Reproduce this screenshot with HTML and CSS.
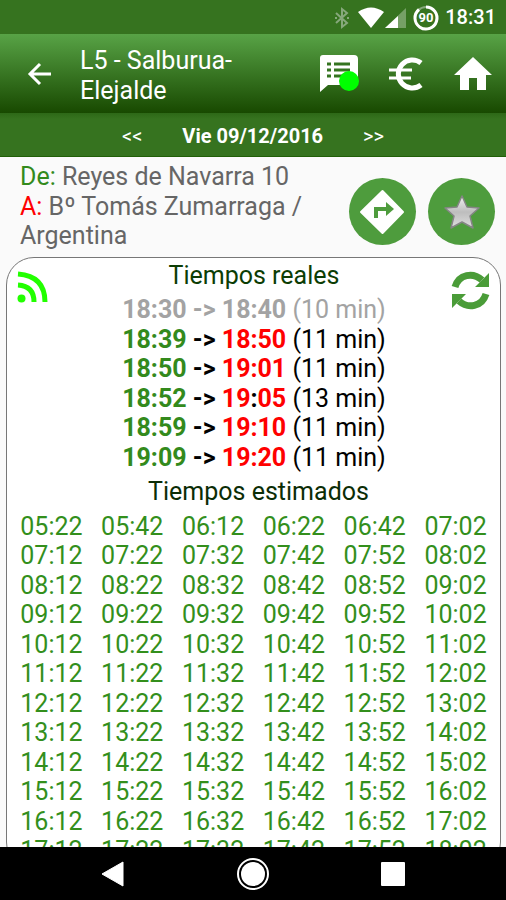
FILE: index.html
```html
<!DOCTYPE html>
<html lang="es">
<head>
<meta charset="utf-8">
<meta name="viewport" content="width=device-width, initial-scale=1">
<title>L5 - Salburua-Elejalde</title>
<link rel="stylesheet" href="styles.css">
</head>
<body>
<div class="screen">
  <div class="status">
    <svg class="bt" width="14" height="22" viewBox="0 0 14 22" aria-hidden="true"><path d="M1 6 12 16 7 20V2l5 4L1 16" fill="none" stroke="#86a87b" stroke-width="2"/><path d="M0 11h2M12 11h2" stroke="#86a87b" stroke-width="2"/></svg>
    <svg class="wifi" width="26" height="22" viewBox="0 0 26 22" aria-hidden="true"><path d="M0 5Q13-4 26 5L13 21Z" fill="#fff"/></svg>
    <svg class="cell" width="21" height="22" viewBox="0 0 21 22" aria-hidden="true"><path d="M0 21 21 1V21Z" fill="#76a066"/><path d="M0 21 13 9V21Z" fill="#fff"/></svg>
    <svg class="battery" width="26" height="26" viewBox="0 0 26 26" aria-hidden="true"><circle cx="13" cy="13" r="11" fill="none" stroke="#86a87b" stroke-width="2"/><path d="M13 2A11 11 0 1 1 6 4.500" fill="none" stroke="#fff" stroke-width="3"/><text x="13" y="17" text-anchor="middle" class="battery-text">90</text></svg>
    <span class="clock">18:31</span>
  </div>

  <header class="appbar">
    <button class="icon-btn back" aria-label="Volver"><svg width="24" height="24" viewBox="0 0 24 24"><path d="M23 12H3M12 2 2 12l10 10" fill="none" stroke="#fff" stroke-width="3"/></svg></button>
    <h1 class="title">L5 - Salburua-Elejalde</h1>
    <button class="icon-btn" aria-label="Avisos"><svg width="42" height="40" viewBox="0 0 42 40"><path d="M3 1H34Q38 1 38 5V27Q38 31 34 31H8L0 38V4Q0 1 3 1Z" fill="#fff"/><path d="M7 10h4M7 16h4M7 22h4M14 10h16M14 16h16M14 22h12" stroke="#347420" stroke-width="3"/><circle cx="29" cy="27" r="10" fill="#0f0"/></svg></button>
    <button class="icon-btn" aria-label="Tarifas"><svg width="36" height="36" viewBox="0 0 36 36"><path d="M31 7A14 14 0 1 0 31 29" fill="none" stroke="#fff" stroke-width="5"/><path d="M-2 14H21M-2 22H20" stroke="#fff" stroke-width="3" transform="translate(1 0)"/></svg></button>
    <button class="icon-btn" aria-label="Inicio"><svg width="38" height="34" viewBox="0 0 38 34"><path d="M19 0 38 18H32V33H23V21H15V33H6V18H0Z" fill="#fff"/></svg></button>
  </header>

  <nav class="datebar" aria-label="Fecha">
    <button class="day-btn">&lt;&lt;</button>
    <strong>Vie 09/12/2016</strong>
    <button class="day-btn">&gt;&gt;</button>
  </nav>

  <main class="content">
    <section class="route">
      <p class="stops"><span class="from">De:</span> Reyes de Navarra 10<br><span class="to">A:</span> Bº Tomás Zumarraga / Argentina</p>
      <button class="round" aria-label="Cómo llegar"><svg width="67" height="67" viewBox="0 0 67 67"><path d="M33.500 13 54 34 33.500 55 12 34Z" fill="#fff" stroke="#fff" stroke-width="2" stroke-linejoin="round"/><path d="M27 40V31H40" fill="none" stroke="#4e9c3d" stroke-width="4"/><path d="M37 24 45 31 37 38Z" fill="#4e9c3d"/></svg></button>
      <button class="round" aria-label="Favorito"><svg width="67" height="67" viewBox="0 0 67 67"><defs><linearGradient id="silver" x2="0" y2="1"><stop offset="0" stop-color="#f4f4f4"/><stop offset=".5" stop-color="#bdbdbd"/><stop offset="1" stop-color="#dedede"/></linearGradient></defs><path d="M34 18 39 29 51 30 42 38 45 50 34 44 23 50 26 38 17 30 29 29Z" fill="url(#silver)" stroke="#858585" stroke-width="1.500" stroke-linejoin="round"/></svg></button>
    </section>

    <section class="card">
      <div class="live">
        <svg width="32" height="32" viewBox="0 0 32 32" role="img" aria-label="En directo"><circle cx="4.500" cy="27.500" r="4" fill="#2f0"/><path d="M1 14Q17 15 17 31M1 3Q28 5 28 31" fill="none" stroke="#2f0" stroke-width="5"/></svg>
        <div class="live-times">
          <h2>Tiempos reales</h2>
          <ul>
            <li class="past"><b>18:30 -&gt; 18:40</b> (10 min)</li>
            <li><b><span class="dep">18:39</span> -&gt; <span class="arr">18:50</span></b> (11 min)</li>
            <li><b><span class="dep">18:50</span> -&gt; <span class="arr">19:01</span></b> (11 min)</li>
            <li><b><span class="dep">18:52</span> -&gt; <span class="arr">19</span>:<span class="arr">05</span></b> (13 min)</li>
            <li><b><span class="dep">18:59</span> -&gt; <span class="arr">19:10</span></b> (11 min)</li>
            <li><b><span class="dep">19:09</span> -&gt; <span class="arr">19:20</span></b> (11 min)</li>
          </ul>
        </div>
        <button class="icon-btn refresh" aria-label="Actualizar"><svg width="39" height="39" viewBox="0 0 39 39"><path d="M4 16C8 3 22 1 31 9M35 23C31 36 17 38 8 30" fill="none" stroke="#4a9c38" stroke-width="7"/><path d="M38 2V16H24L29 11 32 8ZM1 37V23H15L10 28 7 31Z" fill="#4a9c38"/></svg></button>
      </div>
      <h2 class="estimated">Tiempos estimados</h2>
      <table class="times" aria-label="Tiempos estimados">
        <tbody>
        <tr><td>05:22</td><td>05:42</td><td>06:12</td><td>06:22</td><td>06:42</td><td>07:02</td></tr>
        <tr><td>07:12</td><td>07:22</td><td>07:32</td><td>07:42</td><td>07:52</td><td>08:02</td></tr>
        <tr><td>08:12</td><td>08:22</td><td>08:32</td><td>08:42</td><td>08:52</td><td>09:02</td></tr>
        <tr><td>09:12</td><td>09:22</td><td>09:32</td><td>09:42</td><td>09:52</td><td>10:02</td></tr>
        <tr><td>10:12</td><td>10:22</td><td>10:32</td><td>10:42</td><td>10:52</td><td>11:02</td></tr>
        <tr><td>11:12</td><td>11:22</td><td>11:32</td><td>11:42</td><td>11:52</td><td>12:02</td></tr>
        <tr><td>12:12</td><td>12:22</td><td>12:32</td><td>12:42</td><td>12:52</td><td>13:02</td></tr>
        <tr><td>13:12</td><td>13:22</td><td>13:32</td><td>13:42</td><td>13:52</td><td>14:02</td></tr>
        <tr><td>14:12</td><td>14:22</td><td>14:32</td><td>14:42</td><td>14:52</td><td>15:02</td></tr>
        <tr><td>15:12</td><td>15:22</td><td>15:32</td><td>15:42</td><td>15:52</td><td>16:02</td></tr>
        <tr><td>16:12</td><td>16:22</td><td>16:32</td><td>16:42</td><td>16:52</td><td>17:02</td></tr>
        <tr><td>17:12</td><td>17:22</td><td>17:32</td><td>17:42</td><td>17:52</td><td>18:02</td></tr>
        </tbody>
      </table>
    </section>
  </main>

  <nav class="navbar" aria-label="Sistema">
    <button class="icon-btn" aria-label="Atrás"><svg width="24" height="26" viewBox="0 0 24 26"><path d="M22 1V25L1 13Z" fill="#fff" stroke="#fff" stroke-linejoin="round"/></svg></button>
    <button class="icon-btn" aria-label="Inicio del sistema"><svg width="32" height="32" viewBox="0 0 32 32"><circle cx="16" cy="16" r="15" fill="none" stroke="#fff" stroke-width="2"/><circle cx="16" cy="16" r="12" fill="#fff"/></svg></button>
    <button class="icon-btn" aria-label="Recientes"><svg width="24" height="24" viewBox="0 0 24 24"><rect width="24" height="24" rx="1" fill="#fff"/></svg></button>
  </nav>
</div>
</body>
</html>
```
FILE: styles.css
```css
* { box-sizing: border-box; }

body {
  margin: 0;
  font-family: Roboto, "Liberation Sans", sans-serif;
  font-size: 25px;
  line-height: 1.18;
}

h1, h2, p, ul {
  margin: 0;
  padding: 0;
  font-size: inherit;
  font-weight: 400;
}

ul { list-style: none; }

svg { display: block; flex: none; overflow: visible; }

button {
  padding: 0;
  border: 0;
  background: none;
  color: inherit;
  font: inherit;
}

.screen {
  display: flex;
  flex-direction: column;
  height: 100vh;
  overflow: hidden;
  background: #fafafa;
}

.status {
  display: flex;
  flex: none;
  align-items: center;
  justify-content: flex-end;
  height: 34px;
  padding: 1px 10px 0 0;
  background: #36731f;
  color: #fff;
}

.wifi { margin-left: 9px; }
.cell { margin-left: 1px; }
.battery { margin-left: 7px; }
.battery-text { font-size: 13px; font-weight: 700; fill: #fff; }
.clock { margin-left: 6px; font-size: 20px; font-weight: 500; }

.appbar {
  display: flex;
  flex: none;
  align-items: center;
  gap: 28px;
  min-height: 79px;
  padding: 0 14px 0 28px;
  background: linear-gradient(#58a346, #184900);
  color: #fff;
}

.title {
  flex: 1;
  max-width: 210px;
  margin-right: auto;
  padding-top: 4px;
}

.datebar {
  display: flex;
  flex: none;
  align-items: center;
  justify-content: center;
  gap: 40px;
  height: 44px;
  padding-top: 4px;
  border-bottom: 1px solid #215f08;
  background: linear-gradient(#2d6817, #36731f 6px);
  color: #fff;
  font-size: 20px;
}

.content {
  display: flex;
  flex: 1;
  flex-direction: column;
  min-height: 0;
  padding: 5px 5px 0 6px;
  overflow: hidden;
}

.route {
  display: flex;
  flex: none;
  align-items: flex-end;
  gap: 12px;
  margin-bottom: 6px;
  padding: 0 6px 0 14px;
}

.stops { flex: 1; color: #666; }
.from, .dep { color: #338a1c; }
.to, .arr { color: #f00; }

.round {
  margin-bottom: 6px;
  border-radius: 50%;
  background: #4e9c3d;
}

.card {
  flex: none;
  padding: 3px 4px;
  border: 1px solid #777;
  border-radius: 28px;
  background: #fff;
}

.live {
  display: flex;
  align-items: flex-start;
  justify-content: space-between;
  padding: 10px 6px 0;
}

.live-times {
  margin-top: -10px;
  padding-left: 8px;
  text-align: center;
}

.live-times h2 { margin-bottom: 5px; color: #0c3d04; }
.past { color: #a3a3a3; }

.estimated {
  margin: 5px 0;
  padding-left: 10px;
  text-align: center;
  color: #0b2d06;
}

.times {
  width: 100%;
  table-layout: fixed;
  border-collapse: collapse;
  color: #338f1c;
  text-align: center;
}

.times td { padding: 0; }

.navbar {
  display: flex;
  flex: none;
  align-items: center;
  justify-content: space-between;
  height: 53px;
  padding: 0 20%;
  background: #000;
}
```
